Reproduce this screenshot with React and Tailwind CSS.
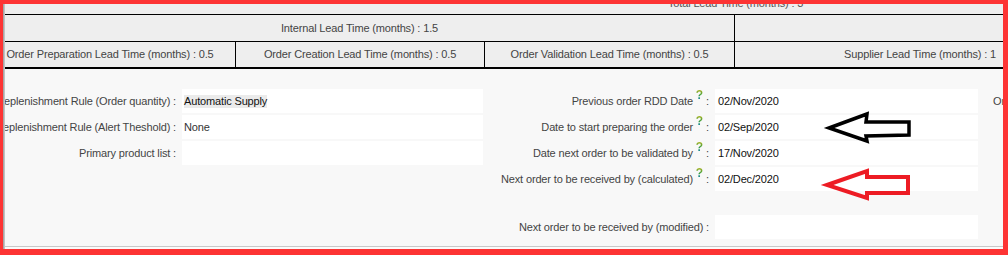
import React from "react";

function Q() {
  return (
    <sup className="text-[12px] font-bold tracking-normal bg-linear-to-b from-[#c9b800] via-[#3aa03a] to-[#1b6fc2] bg-clip-text text-transparent">
      ?
    </sup>
  );
}

function Row({ left, leftValue, right, rightValue, extra, className = "" }) {
  return (
    <div className={"flex h-[24px] shrink-0 " + className}>
      <div className="w-[207px] shrink-0 flex items-center justify-end pr-[6px] whitespace-nowrap text-[#444]">
        {left}
      </div>
      {left !== undefined ? (
        <div className="w-[301px] shrink-0 bg-white flex items-center pl-[2px] whitespace-nowrap">
          {leftValue}
        </div>
      ) : (
        <div className="w-[301px] shrink-0" />
      )}
      <div className="w-[232px] shrink-0 flex items-center justify-end pr-[6px] whitespace-nowrap text-[#444]">
        {right}
      </div>
      <div className="w-[263px] shrink-0 bg-white flex items-center pl-[3px] whitespace-nowrap text-[#111]">
        {rightValue}
      </div>
      <div className="ml-[15px] shrink-0 flex items-center whitespace-nowrap text-[#444]">
        {extra}
      </div>
    </div>
  );
}

export default function App() {
  return (
    <div className="relative w-[1008px] h-[255px] bg-[#fd3434] pt-[4px] pl-[3px] pr-[5px] pb-[6px] font-['Liberation_Sans',Arial,sans-serif] text-[11px] tracking-[-0.15px]">
      <div className="relative w-full h-full overflow-hidden bg-[#fafafa] flex flex-col">
        {/* top band with clipped total */}
        <div className="h-[10px] shrink-0 overflow-hidden bg-[#eeeeee] pl-[665px]">
          <div className="mt-[-8px] leading-[14px] whitespace-nowrap text-[#555]">
            Total Lead Time (months) : 3
          </div>
        </div>

        {/* lead time table */}
        <div className="ml-[-18px] w-[1500px] shrink-0 border-t border-black border-b-2 bg-[#eeeeee] text-[#444]">
          <div className="flex h-[27px] border-b border-black">
            <div className="w-[750px] shrink-0 border-r border-black flex items-center justify-center whitespace-nowrap">
              Internal Lead Time (months) : 1.5
            </div>
            <div className="flex-1" />
          </div>
          <div className="flex h-[25px]">
            <div className="w-[251px] shrink-0 border-r border-black flex items-center justify-center whitespace-nowrap">
              Order Preparation Lead Time (months) : 0.5
            </div>
            <div className="w-[249px] shrink-0 border-r border-black flex items-center justify-center whitespace-nowrap">
              Order Creation Lead Time (months) : 0.5
            </div>
            <div className="w-[250px] shrink-0 border-r border-black flex items-center justify-center whitespace-nowrap">
              Order Validation Lead Time (months) : 0.5
            </div>
            <div className="w-[370px] shrink-0 flex items-center justify-center whitespace-nowrap">
              Supplier Lead Time (months) : 1
            </div>
          </div>
        </div>

        {/* form body */}
        <div className="h-[177px] shrink-0 bg-[#f8f8f8] border-b border-[#c8c8c8] box-content">
          <div className="flex flex-col gap-[2px] pt-[20px] ml-[-28px]">
            <Row
              left="Replenishment Rule (Order quantity) :"
              leftValue={<span className="bg-[#ebebeb] text-[#111] leading-[13px]">Automatic Supply</span>}
              right={<span>Previous order RDD Date <Q /> :</span>}
              rightValue="02/Nov/2020"
              extra="Order quantity"
            />
            <Row
              left="Replenishment Rule (Alert Theshold) :"
              leftValue={<span className="text-[#333]">None</span>}
              right={<span>Date to start preparing the order <Q /> :</span>}
              rightValue="02/Sep/2020"
            />
            <Row
              left="Primary product list :"
              leftValue={null}
              right={<span>Date next order to be validated by <Q /> :</span>}
              rightValue="17/Nov/2020"
            />
            <Row
              right={<span>Next order to be received by (calculated) <Q /> :</span>}
              rightValue="02/Dec/2020"
            />
            <Row
              className="mt-[22px]"
              right={<span>Next order to be received by (modified) :</span>}
              rightValue=""
            />
          </div>
        </div>

        {/* left shadow edge */}
        <div className="absolute left-0 top-0 bottom-0 w-[2px] bg-linear-to-r from-[#9a9a9a] to-[#d0d0d0]" />
      </div>

      {/* annotation arrows */}
      <svg
        className="absolute left-0 top-0 pointer-events-none"
        width="1008"
        height="255"
        viewBox="0 0 1008 255"
      >
        <polygon
          points="829,128 867,114 866,122 909,122 909,135 866,136 867,141"
          fill="none"
          stroke="#000"
          strokeWidth="3.5"
          strokeLinejoin="miter"
        />
        <polygon
          points="827,185 867,171 867,177 908,177 908,193 867,193 867,198"
          fill="none"
          stroke="#ed1c24"
          strokeWidth="4"
          strokeLinejoin="miter"
        />
      </svg>
    </div>
  );
}
